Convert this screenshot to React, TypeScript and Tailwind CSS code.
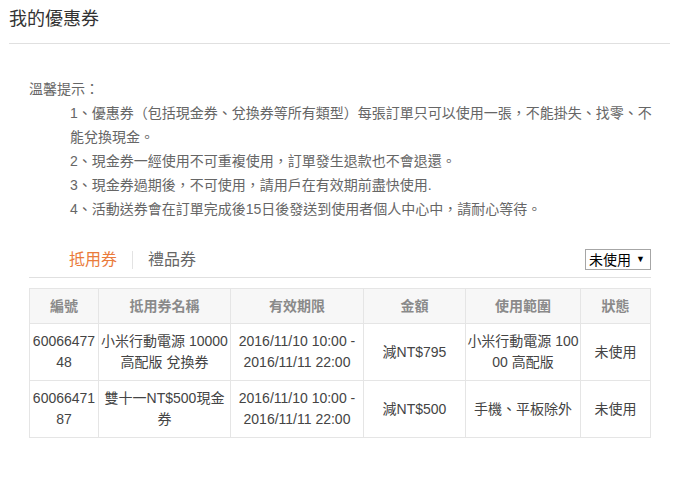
import React from "react";

const font = { fontFamily: '"Liberation Sans", "Noto Sans CJK TC", sans-serif' };

const rows = [
  {
    id: "6006647748",
    name: "小米行動電源 10000 高配版 兌換券",
    from: "2016/11/10 10:00 -",
    to: "2016/11/11 22:00",
    amount: "減NT$795",
    scope: "小米行動電源 10000 高配版",
    status: "未使用",
  },
  {
    id: "6006647187",
    name: "雙十一NT$500現金券",
    from: "2016/11/10 10:00 -",
    to: "2016/11/11 22:00",
    amount: "減NT$500",
    scope: "手機、平板除外",
    status: "未使用",
  },
];

export default function App() {
  return (
    <div
      className="w-[693px] h-[491px] bg-white overflow-hidden"
      style={{ fontFamily: '"Liberation Sans", "Noto Sans CJK TC", sans-serif' }}
    >
      <div className="px-[9px] pt-[7px]">
        <div className="text-[18px] leading-[24px] text-[#333]">我的優惠券</div>
        <div className="mt-[12px] w-[661px] h-px bg-[#e0e0e0]" />
      </div>

      <div className="pl-[29px] pr-[33px] mt-[33px] text-[14px] leading-[24px] text-[#666]">
        <div>溫馨提示：</div>
        <div className="pl-[41px]">
          <p>1、優惠券（包括現金券、兌換券等所有類型）每張訂單只可以使用一張，不能掛失、找零、不能兌換現金。</p>
          <p>2、現金券一經使用不可重複使用，訂單發生退款也不會退還。</p>
          <p>3、現金券過期後，不可使用，請用戶在有效期前盡快使用.</p>
          <p>4、活動送券會在訂單完成後15日後發送到使用者個人中心中，請耐心等待。</p>
        </div>
      </div>

      <div className="ml-[29px] w-[622px] mt-[27px] h-[30px] border-b border-[#e0e0e0] flex items-start">
        <div className="pl-[40px] flex items-center h-[24px]">
          <span className="text-[16px] leading-[24px] text-[#ea7b3b]">抵用券</span>
          <span className="mx-[15px] w-px h-[18px] bg-[#e3e3e3]" />
          <span className="text-[16px] leading-[24px] text-[#666]">禮品券</span>
        </div>
        <div className="ml-auto mt-[1px] h-[21px] w-[66px] border border-[#a6a6a6] flex items-center justify-between pl-[3px] pr-[5px] text-[14px] text-black leading-none">
          <span>未使用</span>
          <span className="text-[9px]">▼</span>
        </div>
      </div>

      <table
        className="ml-[29px] mt-[10px] w-[621px] table-fixed border-collapse text-[14px]"
        style={font}
      >
        <colgroup>
          <col className="w-[69px]" />
          <col className="w-[132px]" />
          <col className="w-[133px]" />
          <col className="w-[102px]" />
          <col className="w-[115px]" />
          <col className="w-[70px]" />
        </colgroup>
        <thead>
          <tr className="bg-[#f7f7f7]">
            {["編號", "抵用券名稱", "有效期限", "金額", "使用範圍", "狀態"].map((h) => (
              <th
                key={h}
                className="h-[35px] border border-[#e5e5e5] text-center font-bold text-[#8a8a8a] leading-[20px] p-0"
              >
                {h}
              </th>
            ))}
          </tr>
        </thead>
        <tbody className="text-[#444]">
          {rows.map((r) => (
            <tr key={r.id}>
              <td className="border border-[#e5e5e5] text-center break-all px-[1px] py-[7px] leading-[21px]">
                {r.id}
              </td>
              <td className="border border-[#e5e5e5] text-center break-all px-[1px] py-[7px] leading-[21px]">
                {r.name}
              </td>
              <td className="border border-[#e5e5e5] text-center px-[1px] py-[7px] leading-[21px]">
                <span className="block">{r.from}</span>
                <span className="block">{r.to}</span>
              </td>
              <td className="border border-[#e5e5e5] text-center px-[1px] py-[7px] leading-[21px]">
                {r.amount}
              </td>
              <td className="border border-[#e5e5e5] text-center break-all px-[1px] py-[7px] leading-[21px]">
                {r.scope}
              </td>
              <td className="border border-[#e5e5e5] text-center px-[1px] py-[7px] leading-[21px]">
                {r.status}
              </td>
            </tr>
          ))}
        </tbody>
      </table>
    </div>
  );
}
